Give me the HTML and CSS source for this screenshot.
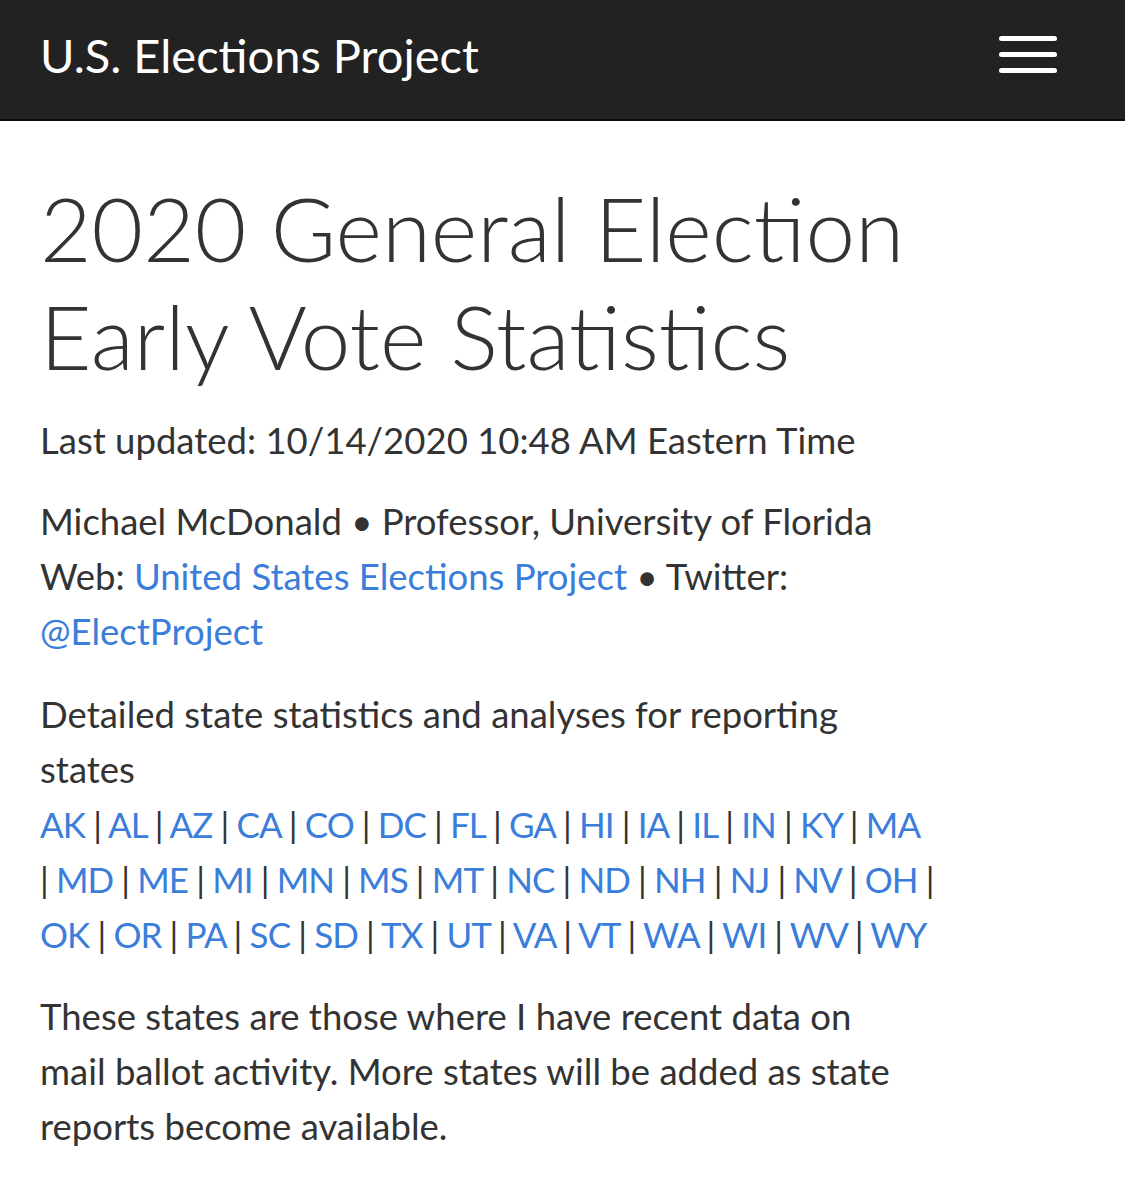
FILE: index.html
```html
<!DOCTYPE html>
<html lang="en">
<head>
<meta charset="utf-8">
<title>2020 General Election Early Vote Statistics</title>
<link rel="stylesheet" href="styles.css">
</head>
<body>
<header class="navbar">
  <a class="brand" href="#">U.S. Elections Project</a>
  <button class="toggle" aria-label="Menu">
    <span class="bar"></span>
    <span class="bar"></span>
    <span class="bar"></span>
  </button>
</header>
<main class="content">
  <h1 class="title">2020 General Election<br>Early Vote Statistics</h1>
  <p class="updated">Last updated: 10/14/2020 10:48 AM Eastern Time</p>
  <p class="byline">Michael McDonald &bull; Professor, University of Florida<br>Web: <a href="#">United States Elections Project</a> &bull; Twitter:<br><a href="#">@ElectProject</a></p>
  <p class="states">Detailed state statistics and analyses for reporting<br>states<br><span class="list"><a href="#">AK</a> | <a href="#">AL</a> | <a href="#">AZ</a> | <a href="#">CA</a> | <a href="#">CO</a> | <a href="#">DC</a> | <a href="#">FL</a> | <a href="#">GA</a> | <a href="#">HI</a> | <a href="#">IA</a> | <a href="#">IL</a> | <a href="#">IN</a> | <a href="#">KY</a> | <a href="#">MA</a><br>| <a href="#">MD</a> | <a href="#">ME</a> | <a href="#">MI</a> | <a href="#">MN</a> | <a href="#">MS</a> | <a href="#">MT</a> | <a href="#">NC</a> | <a href="#">ND</a> | <a href="#">NH</a> | <a href="#">NJ</a> | <a href="#">NV</a> | <a href="#">OH</a> |<br><a href="#">OK</a> | <a href="#">OR</a> | <a href="#">PA</a> | <a href="#">SC</a> | <a href="#">SD</a> | <a href="#">TX</a> | <a href="#">UT</a> | <a href="#">VA</a> | <a href="#">VT</a> | <a href="#">WA</a> | <a href="#">WI</a> | <a href="#">WV</a> | <a href="#">WY</a></span></p>
  <p class="note">These states are those where I have recent data on<br>mail ballot activity. More states will be added as state<br>reports become available.</p>
</main>
</body>
</html>
```
FILE: styles.css
```css
html, body {
  margin: 0;
  padding: 0;
  background: #fff;
}
body {
  font-family: Lato, "Noto Sans", sans-serif;
  color: #333;
  font-size: 36.5px;
  line-height: 55px;
}
.navbar {
  height: 119px;
  background: #222;
  border-bottom: 2px solid #0a0a0a;
  display: flex;
  align-items: center;
  justify-content: space-between;
  padding: 0 68px 0 40px;
}
.brand {
  color: #fff;
  text-decoration: none;
  font-size: 47px;
  line-height: 1;
  margin-top: -9px;
}
.toggle {
  background: none;
  border: 0;
  padding: 0;
  display: flex;
  flex-direction: column;
  gap: 11px;
  margin-top: -10px;
  cursor: pointer;
}
.bar {
  display: block;
  width: 58px;
  height: 5px;
  border-radius: 3px;
  background: #fff;
}
.content {
  padding: 0 40px;
  white-space: nowrap;
}
.title {
  font-size: 89px;
  font-weight: 300;
  line-height: 108px;
  margin: 53px 0 23px;
}
p {
  margin: 0 0 27px;
}
.updated {
  margin-bottom: 26px;
}
.byline {
  margin-bottom: 28px;
}
.list {
  font-size: 35px;
  letter-spacing: -0.9px;
}
a {
  color: #3b7dda;
  text-decoration: none;
}
```
